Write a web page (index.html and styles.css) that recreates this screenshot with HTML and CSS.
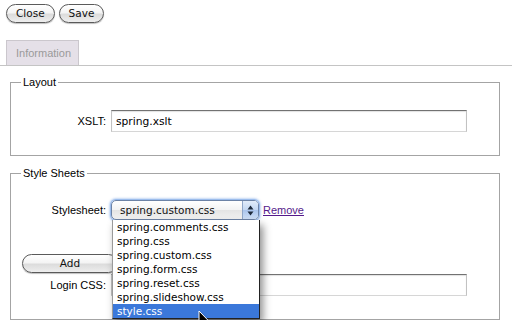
FILE: index.html
```html
<!DOCTYPE html>
<html>
<head>
<meta charset="utf-8">
<link rel="stylesheet" href="styles.css">
</head>
<body>
<div class="toolbar">
  <button class="pill">Close</button>
  <button class="pill">Save</button>
</div>
<div class="tabs">
  <div class="tab">Information</div>
</div>
<fieldset class="group group-layout">
  <legend>Layout</legend>
  <div class="row">
    <label class="lbl">XSLT:</label>
    <input class="field" type="text" value="spring.xslt" readonly>
  </div>
</fieldset>
<fieldset class="group group-styles">
  <legend>Style Sheets</legend>
  <div class="row row-select">
    <label class="lbl">Stylesheet:</label>
    <div class="select-wrap">
      <div class="select">
        <span class="select-value">spring.custom.css</span>
        <span class="arrows">
          <svg width="7" height="11" viewBox="0 0 7 11"><path d="M3.5 0.5 L6.5 4.5 L0.5 4.5 Z M3.5 10.5 L6.5 6.5 L0.5 6.5 Z" fill="#1d2a3c"/></svg>
        </span>
      </div>
      <ul class="menu">
        <li>spring.comments.css</li>
        <li>spring.css</li>
        <li>spring.custom.css</li>
        <li>spring.form.css</li>
        <li>spring.reset.css</li>
        <li>spring.slideshow.css</li>
        <li class="active">style.css</li>
        <svg class="cursor" width="14" height="20" viewBox="0 0 14 20"><path d="M1 1 L1 16 L4.5 12.6 L7.2 18.6 L9.4 17.6 L6.8 11.8 L11.5 11.8 Z" fill="#000" stroke="#fff" stroke-width="1" stroke-linejoin="round"/></svg>
      </ul>
    </div>
    <a class="link" href="#">Remove</a>
  </div>
  <div class="add-row">
    <button class="pill add">Add</button>
  </div>
  <div class="row row-login">
    <label class="lbl">Login CSS:</label>
    <input class="field" type="text" value="" readonly>
  </div>
</fieldset>
</body>
</html>
```
FILE: styles.css
```css
html, body {
  margin: 0;
  padding: 0;
  background: #fff;
}
body {
  font-family: "Liberation Sans", Arial, sans-serif;
  font-size: 11px;
  color: #000;
}
.toolbar {
  display: flex;
  gap: 4px;
  padding: 4px 0 0 6px;
}
.pill {
  box-sizing: border-box;
  height: 19px;
  padding: 0 9px;
  border: 1px solid #5a5a5a;
  border-radius: 10px;
  background: linear-gradient(#ffffff 0%, #f4f4f4 45%, #dcdcdc 55%, #eeeeee 100%);
  box-shadow: 0 1px 1px rgba(0,0,0,0.25);
  font-family: "DejaVu Sans", sans-serif;
  font-size: 10.5px;
  line-height: 17px;
  color: #111;
  cursor: default;
}
.tabs {
  margin-top: 17px;
  padding-left: 6px;
  border-bottom: 1px solid #c4c4c4;
  display: flex;
}
.tab {
  box-sizing: border-box;
  width: 73px;
  height: 25px;
  padding-left: 9px;
  border: 1px solid #cbc7cd;
  border-bottom: none;
  background: #e5e0e8;
  color: #9a9a9a;
  line-height: 24px;
}
.group {
  box-sizing: border-box;
  margin: 10px 12px 0 10px;
  padding: 0 10px 23px 10px;
  border: 1px solid #a4a4a4;
  min-width: 0;
}
.group-styles {
  margin-top: 11px;
}
.group legend {
  padding: 0 2px;
  line-height: 13px;
  font-size: 11px;
}
.row {
  display: grid;
  grid-template-columns: 85px 356px;
  column-gap: 5px;
  align-items: center;
  margin-top: 21px;
}
.lbl {
  text-align: right;
}
.field {
  box-sizing: border-box;
  height: 22px;
  margin: 0;
  padding: 0 4px;
  border: 1px solid #c2c2c2;
  border-top-color: #727272;
  border-bottom-color: #d6d6d6;
  box-shadow: inset 0 1px 1px rgba(0,0,0,0.12);
  font-family: "DejaVu Sans", sans-serif;
  font-size: 10.7px;
  color: #000;
  outline: none;
  background: #fff;
}
.row-select {
  grid-template-columns: 85px 148px auto;
  column-gap: 5px;
  margin-top: 20px;
}
.row-select .link {
  margin-left: -1px;
}
.select-wrap {
  position: relative;
  height: 20px;
}
.select {
  box-sizing: border-box;
  display: flex;
  align-items: center;
  height: 20px;
  border: 1px solid #6d83a6;
  border-radius: 5px;
  background: linear-gradient(#ffffff 0%, #f3f3f3 50%, #e4e4e4 51%, #f2f2f2 100%);
  box-shadow: 0 0 0 1px rgba(120,165,230,0.55), 0 0 2px 2px rgba(120,165,230,0.45);
  overflow: hidden;
}
.select-value {
  flex: 1;
  padding-left: 8px;
  font-family: "DejaVu Sans", sans-serif;
  font-size: 10.5px;
  color: #111;
}
.arrows {
  width: 15px;
  height: 100%;
  display: flex;
  align-items: center;
  justify-content: center;
  border-left: 1px solid #8fa6c8;
  background: linear-gradient(#e2ecf9 0%, #c3d7f2 50%, #a9c4ec 51%, #cfe0f7 100%);
}
.menu {
  position: absolute;
  top: 20px;
  left: 1px;
  width: 146px;
  margin: 0;
  padding: 0;
  list-style: none;
  background: #fff;
  border: 1px solid #9a9a9a;
  border-top: none;
  border-right-color: #222;
  border-bottom-color: #222;
  box-shadow: 3px 5px 8px rgba(0,0,0,0.45);
  z-index: 5;
}
.menu li {
  height: 14px;
  line-height: 14px;
  padding-left: 4px;
  font-family: "DejaVu Sans", sans-serif;
  font-size: 10.5px;
  color: #000;
  white-space: nowrap;
}
.menu li.active {
  background: #3b78da;
  color: #fff;
}
.cursor {
  position: absolute;
  left: 85px;
  top: 90px;
  filter: drop-shadow(1px 2px 1px rgba(0,0,0,0.35));
}
.link {
  color: #551a8b;
  text-decoration: underline;
}
.add-row {
  margin-top: 34px;
  padding-left: 1px;
}
.pill.add {
  display: block;
  width: 96px;
  padding: 0;
  text-align: center;
}
.row-login {
  margin-top: 1px;
}
```
